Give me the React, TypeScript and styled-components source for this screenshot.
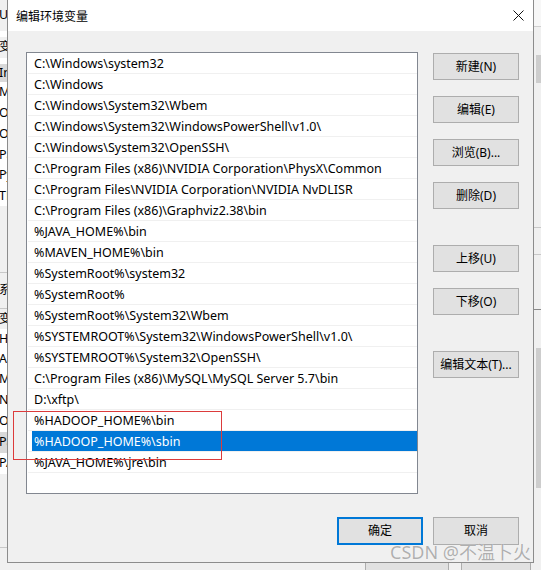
import React from "react";
import styled, { createGlobalStyle } from "styled-components";

const GlobalStyle = createGlobalStyle`
  html, body { margin: 0; padding: 0; }
  body {
    width: 541px;
    height: 570px;
    overflow: hidden;
    font-family: "Noto Sans", "Noto Sans CJK SC", sans-serif;
    font-size: 12px;
    color: #000;
  }
  * { box-sizing: border-box; }
`;

const UI_FONT = `"Noto Sans", "Noto Sans CJK SC", sans-serif`;

const Desktop = styled.div`
  position: relative;
  width: 541px;
  height: 570px;
  overflow: hidden;
  background: #f0f0f0;
  display: flex;
  flex-direction: column;
  font-family: ${UI_FONT};
`;

const BackTop = styled.div`
  flex: 1;
  display: flex;
  justify-content: space-between;
`;

const LeftStrip = styled.div`
  width: 8px;
  display: flex;
  flex-direction: column;
  margin-left: -1px;
  overflow: hidden;
`;

const StripRow = styled.div<{ $h: number; $bg?: string; $line?: boolean }>`
  height: ${(p) => p.$h}px;
  background: ${(p) => p.$bg || "transparent"};
  border-bottom: ${(p) => (p.$line ? "1px solid #c8c8c8" : "none")};
  display: flex;
  align-items: center;
  white-space: nowrap;
  overflow: hidden;
  font-size: 12.5px;
  line-height: 1;
`;

const RightStrip = styled.div`
  width: 8px;
  display: flex;
  flex-direction: column;
  align-items: flex-end;
`;

const RightPiece = styled.div<{ $h: number; $bg: string; $w?: number }>`
  height: ${(p) => p.$h}px;
  width: ${(p) => p.$w ?? 8}px;
  background: ${(p) => p.$bg};
`;

const BackBottom = styled.div`
  height: 8px;
  display: flex;
  justify-content: flex-end;
  gap: 12px;
  padding-right: 10px;
`;

const BackButton = styled.div<{ $w: number }>`
  width: ${(p) => p.$w}px;
  border: 1px solid #adadad;
  border-bottom: none;
  background: #e1e1e1;
`;

const Dialog = styled.div`
  position: absolute;
  left: 7px;
  top: 0;
  width: 527px;
  height: 563px;
  border: 1px solid #8c8c8c;
  border-top: none;
  background: #f0f0f0;
  display: flex;
  flex-direction: column;
`;

const TitleBar = styled.div`
  height: 31px;
  background: #ffffff;
  display: flex;
  align-items: center;
  justify-content: space-between;
  padding: 0 9px 0 8px;
`;

const Title = styled.div`
  font-family: "Noto Sans CJK SC", sans-serif;
  font-size: 12px;
  line-height: 1;
  margin-top: 1px;
`;

const CloseBox = styled.div`
  width: 12px;
  height: 12px;
  display: flex;
  align-items: center;
  justify-content: center;
`;

const Body = styled.div`
  flex: 1;
  display: flex;
  flex-direction: column;
  padding: 21px 14px 0 18px;
`;

const Main = styled.div`
  display: flex;
  gap: 15px;
`;

const ListBox = styled.div`
  width: 392px;
  height: 442px;
  border: 1px solid #828790;
  background: #ffffff;
  display: flex;
  flex-direction: column;
`;

const Row = styled.div`
  height: 21px;
  flex: none;
  border-bottom: 1px solid #f0f0f0;
  margin-left: 1px;
  display: flex;
  align-items: stretch;
  padding-left: 4px;
`;

const RowLabel = styled.div<{ $selected?: boolean }>`
  flex: 1;
  display: flex;
  align-items: center;
  padding: 1px 0 0 2px;
  background: ${(p) => (p.$selected ? "#0078d7" : "transparent")};
  color: ${(p) => (p.$selected ? "#ffffff" : "#000000")};
  font-size: 12.5px;
  white-space: nowrap;
  overflow: hidden;
`;

const SideColumn = styled.div`
  width: 86px;
  display: flex;
  flex-direction: column;
  gap: 16px;
  padding-top: 1px;
`;

const Button = styled.div<{ $default?: boolean; $groupStart?: boolean; $h?: number }>`
  height: ${(p) => p.$h ?? 27}px;
  width: 86px;
  flex: none;
  background: #e1e1e1;
  border: ${(p) => (p.$default ? "2px solid #0078d7" : "1px solid #adadad")};
  display: flex;
  align-items: center;
  justify-content: center;
  font-family: ${UI_FONT};
  font-size: 12px;
  line-height: 1;
  margin-top: ${(p) => (p.$groupStart ? "20px" : "0")};
`;

const Footer = styled.div`
  display: flex;
  justify-content: flex-end;
  gap: 10px;
  margin-top: 23px;
`;

const Annotation = styled.div`
  position: absolute;
  left: 13px;
  top: 411px;
  width: 209px;
  height: 49px;
  border: 1px solid #dc3b3b;
  pointer-events: none;
`;

const Watermark = styled.div`
  position: absolute;
  right: 10px;
  bottom: 9px;
  font-family: "Noto Sans", "Noto Sans CJK SC", sans-serif;
  font-size: 18px;
  line-height: 1;
  color: rgba(150, 150, 150, 0.75);
  text-shadow: 0 0 1px rgba(255, 255, 255, 0.9);
  white-space: nowrap;
`;

const paths = [
  "C:\\Windows\\system32",
  "C:\\Windows",
  "C:\\Windows\\System32\\Wbem",
  "C:\\Windows\\System32\\WindowsPowerShell\\v1.0\\",
  "C:\\Windows\\System32\\OpenSSH\\",
  "C:\\Program Files (x86)\\NVIDIA Corporation\\PhysX\\Common",
  "C:\\Program Files\\NVIDIA Corporation\\NVIDIA NvDLISR",
  "C:\\Program Files (x86)\\Graphviz2.38\\bin",
  "%JAVA_HOME%\\bin",
  "%MAVEN_HOME%\\bin",
  "%SystemRoot%\\system32",
  "%SystemRoot%",
  "%SystemRoot%\\System32\\Wbem",
  "%SYSTEMROOT%\\System32\\WindowsPowerShell\\v1.0\\",
  "%SYSTEMROOT%\\System32\\OpenSSH\\",
  "C:\\Program Files (x86)\\MySQL\\MySQL Server 5.7\\bin",
  "D:\\xftp\\",
  "%HADOOP_HOME%\\bin",
  "%HADOOP_HOME%\\sbin",
  "%JAVA_HOME%\\jre\\bin",
];

const SELECTED = 18;

const leftRows: { h: number; t?: string; bg?: string; line?: boolean }[] = [
  { h: 31, t: "U", bg: "#f0f0f0" },
  { h: 6, bg: "#ffffff" },
  { h: 21, t: "变量", bg: "#f0f0f0" },
  { h: 6, bg: "#ffffff" },
  { h: 18, t: "In", bg: "#d9d9d9" },
  { h: 21, t: "M", bg: "#ffffff" },
  { h: 21, t: "O", bg: "#ffffff" },
  { h: 21, t: "O", bg: "#ffffff" },
  { h: 20, t: "Pa", bg: "#ffffff" },
  { h: 21, t: "Py", bg: "#ffffff" },
  { h: 20, t: "TE", bg: "#ffffff" },
  { h: 67, bg: "#f0f0f0", line: true },
  { h: 36, t: "系统", bg: "#f0f0f0", line: true },
  { h: 20, t: "变量", bg: "#f0f0f0" },
  { h: 20, t: "HA", bg: "#ffffff" },
  { h: 20, t: "AN", bg: "#ffffff" },
  { h: 21, t: "M", bg: "#ffffff" },
  { h: 21, t: "NU", bg: "#ffffff" },
  { h: 21, t: "OS", bg: "#ffffff" },
  { h: 21, t: "Pa", bg: "#d9d9d9" },
  { h: 21, t: "PA", bg: "#ffffff" },
  { h: 74, bg: "#f0f0f0", line: true },
];

const rightPieces: { h: number; bg: string; w?: number }[] = [
  { h: 26, bg: "#f7f7f7" },
  { h: 1, bg: "#d0d0d0" },
  { h: 28, bg: "#f0f0f0" },
  { h: 28, bg: "#cdcdcd", w: 5 },
  { h: 144, bg: "#f0f0f0" },
  { h: 1, bg: "#c8c8c8" },
  { h: 26, bg: "#f0f0f0" },
  { h: 1, bg: "#c8c8c8" },
  { h: 54, bg: "#f0f0f0" },
  { h: 1, bg: "#8a8a8a" },
  { h: 38, bg: "#f0f0f0" },
  { h: 140, bg: "#cdcdcd", w: 5 },
];

const CloseIcon = () => (
  <svg width="11" height="11" viewBox="0 0 11 11">
    <path d="M0.5 0.5 L10.5 10.5 M10.5 0.5 L0.5 10.5" stroke="#111" strokeWidth="1" fill="none" />
  </svg>
);

export default function App() {
  return (
    <>
      <GlobalStyle />
      <Desktop>
        <BackTop>
          <LeftStrip>
            {leftRows.map((r, i) => (
              <StripRow key={i} $h={r.h} $bg={r.bg} $line={r.line}>
                {r.t}
              </StripRow>
            ))}
          </LeftStrip>
          <RightStrip>
            {rightPieces.map((p, i) => (
              <RightPiece key={i} $h={p.h} $bg={p.bg} $w={p.w} />
            ))}
          </RightStrip>
        </BackTop>
        <BackBottom>
          <BackButton $w={84} />
          <BackButton $w={70} />
        </BackBottom>

        <Dialog>
          <TitleBar>
            <Title>编辑环境变量</Title>
            <CloseBox>
              <CloseIcon />
            </CloseBox>
          </TitleBar>
          <Body>
            <Main>
              <ListBox>
                {paths.map((p, i) => (
                  <Row key={i}>
                    <RowLabel $selected={i === SELECTED}>{p}</RowLabel>
                  </Row>
                ))}
              </ListBox>
              <SideColumn>
                <Button>新建(N)</Button>
                <Button>编辑(E)</Button>
                <Button>浏览(B)...</Button>
                <Button>删除(D)</Button>
                <Button $groupStart>上移(U)</Button>
                <Button>下移(O)</Button>
                <Button $groupStart>编辑文本(T)...</Button>
              </SideColumn>
            </Main>
            <Footer>
              <Button $default $h={28}>确定</Button>
              <Button $h={28}>取消</Button>
            </Footer>
          </Body>
        </Dialog>

        <Annotation />
        <Watermark>CSDN @不温卜火</Watermark>
      </Desktop>
    </>
  );
}
